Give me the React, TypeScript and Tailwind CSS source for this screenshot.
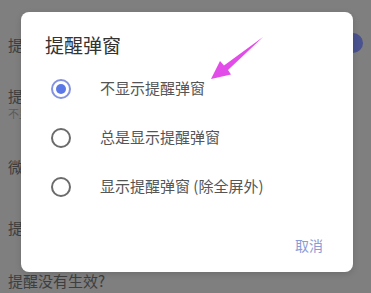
import React from 'react';

const options = [
  { label: '不显示提醒弹窗', checked: true },
  { label: '总是显示提醒弹窗', checked: false },
  { label: '显示提醒弹窗 (除全屏外)', checked: false },
];

function Radio({ checked }: { checked: boolean }) {
  if (checked) {
    return (
      <div className="w-5 h-5 rounded-full border-2 border-[#8592e0] flex items-center justify-center">
        <div className="w-[10px] h-[10px] rounded-full bg-[#5c78e6]" />
      </div>
    );
  }
  return <div className="w-5 h-5 rounded-full border-2 border-[#6b6b6b]" />;
}

export default function App() {
  return (
    <div
      className="relative w-[371px] h-[293px] overflow-hidden bg-[#7f7f7f] text-[#3e3e3e]"
      style={{ fontFamily: '"Noto Sans CJK SC", "Noto Sans", sans-serif' }}
    >
      {/* settings page behind the dim layer */}
      <div className="flex flex-col pl-2 pr-2 text-[15px]">
        <div className="h-[86px] flex items-center justify-between pt-1">
          <span>提醒</span>
          <div className="w-[20px] h-[20px] rounded-full bg-[#4a528f] -mt-1" />
        </div>
        <div className="h-[44px] flex flex-col">
          <span className="leading-[20px]">提醒</span>
          <span className="text-[11px] leading-[14px] text-[#5c5c5c]">不显示</span>
        </div>
        <div className="h-[58px] flex items-center pt-4">
          <span>微信</span>
        </div>
        <div className="h-[60px] flex items-center pt-5">
          <span>提醒</span>
        </div>
        <div className="h-[44px] flex items-center pt-[22px]">
          <span>提醒没有生效?</span>
        </div>
      </div>

      {/* dialog */}
      <div className="absolute left-[21px] top-[12px] w-[332px] h-[260px] rounded-[8px] bg-white shadow-[0_2px_6px_rgba(0,0,0,0.15)] flex flex-col">
        <div className="pl-6 pt-5 text-[19px] leading-[26px] text-[#333333]">提醒弹窗</div>
        <div className="flex flex-col mt-[6px]">
          {options.map((o) => (
            <div key={o.label} className="h-[49px] flex items-center pl-[30px]">
              <Radio checked={o.checked} />
              <span className="ml-[29px] text-[15px] text-[#555555]">{o.label}</span>
            </div>
          ))}
        </div>
        <div className="flex justify-end pr-[30px] mt-6">
          <span className="text-[14px] leading-[20px] text-[#8a9bd6]">取消</span>
        </div>
      </div>

      {/* annotation arrow */}
      <svg className="absolute left-0 top-0 pointer-events-none" width="371" height="293" viewBox="0 0 371 293">
        <polygon
          points="263,37 228,70 231,74.5 211,79 220,61 224,65.5"
          fill="#e24ce8"
        />
      </svg>
    </div>
  );
}
